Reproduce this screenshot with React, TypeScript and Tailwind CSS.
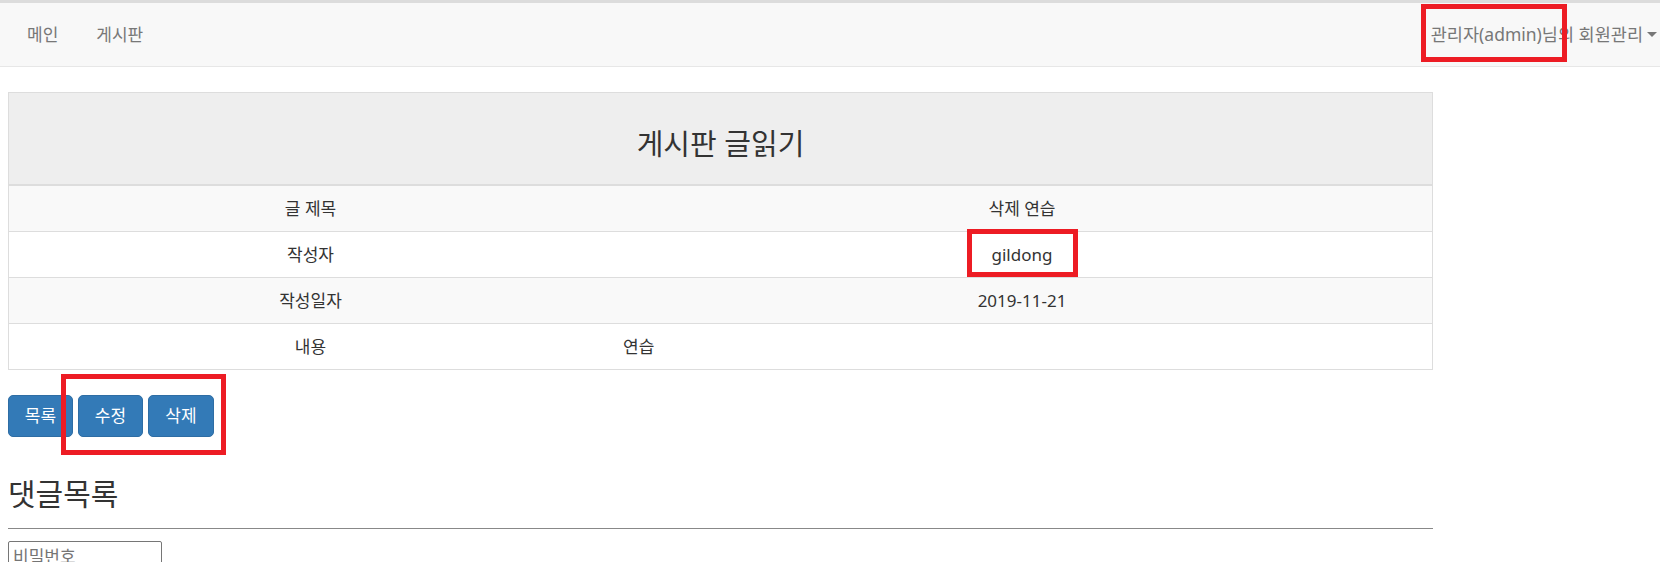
import React from "react";

const font = {
  fontFamily: '"Noto Sans", "Noto Sans CJK KR", sans-serif',
};

export default function App() {
  return (
    <div
      className="relative w-[1660px] h-[562px] overflow-hidden bg-white text-[#333] text-[17px]"
      style={font}
    >
      {/* top strip */}
      <div className="h-[3px] bg-[#dcdcdc]" />

      {/* navbar */}
      <nav className="h-[64px] bg-[#f8f8f8] border-b border-[#e7e7e7] flex items-center text-[#777]">
        <div className="flex items-center pl-[8px]">
          <span className="px-[19px] leading-[25px]">메인</span>
          <span className="px-[19px] leading-[25px]">게시판</span>
        </div>
        <div className="ml-auto flex items-center whitespace-nowrap pr-[3px] leading-[25px] text-[17.5px]">
          <span className="mr-[4px]">관리자(admin)님의 회원관리</span>
          <span className="inline-block w-0 h-0 border-t-[5px] border-t-[#777] border-x-[5px] border-x-transparent" />
        </div>
      </nav>

      {/* main */}
      <main className="px-[8px] pt-[25px]">
        <div className="w-[1425px] border border-[#ddd]">
          <div className="h-[93px] bg-[#eeeeee] border-b-2 border-[#ddd] text-center pt-[34px] text-[29px] leading-[33px]">
            게시판 글읽기
          </div>
          <div className="flex h-[45px] items-center bg-[#f9f9f9]">
            <div className="w-[603px] text-center">글 제목</div>
            <div className="flex-1 text-center">삭제 연습</div>
          </div>
          <div className="flex h-[46px] items-center border-t border-[#ddd] bg-white">
            <div className="w-[603px] text-center">작성자</div>
            <div className="flex-1 text-center">gildong</div>
          </div>
          <div className="flex h-[46px] items-center border-t border-[#ddd] bg-[#f9f9f9]">
            <div className="w-[603px] text-center">작성일자</div>
            <div className="flex-1 text-center">2019-11-21</div>
          </div>
          <div className="flex h-[46px] items-center border-t border-[#ddd] bg-white">
            <div className="w-[603px] text-center">내용</div>
            <div className="flex-1 pl-[11px]">연습</div>
          </div>
        </div>

        <div className="mt-[25px] flex gap-[5px]">
          <button className="w-[65px] h-[42px] rounded-[5px] bg-[#337ab7] border border-[#2e6da4] text-white text-[17px]">
            목록
          </button>
          <button className="w-[65px] h-[42px] rounded-[5px] bg-[#337ab7] border border-[#2e6da4] text-white text-[17px]">
            수정
          </button>
          <button className="w-[66px] h-[42px] rounded-[5px] bg-[#337ab7] border border-[#2e6da4] text-white text-[17px]">
            삭제
          </button>
        </div>

        <h3 className="mt-[40px] text-[30px] leading-[33px] font-normal">댓글목록</h3>
        <hr className="mt-[18px] w-[1425px] border-0 border-t border-[#888]" />
        <input
          className="mt-[12px] w-[154px] h-[30px] border border-[#767676] rounded-[2px] px-[4px] text-[17px] placeholder:text-[#757575]"
          placeholder="비밀번호"
        />
      </main>

      {/* red annotation boxes */}
      <div className="absolute left-[1421px] top-[4px] w-[146px] h-[58px] border-[5px] border-[#ed1c24]" />
      <div className="absolute left-[967px] top-[229px] w-[111px] h-[48px] border-[5px] border-[#ed1c24]" />
      <div className="absolute left-[61px] top-[374px] w-[165px] h-[81px] border-[5px] border-[#ed1c24]" />
    </div>
  );
}
